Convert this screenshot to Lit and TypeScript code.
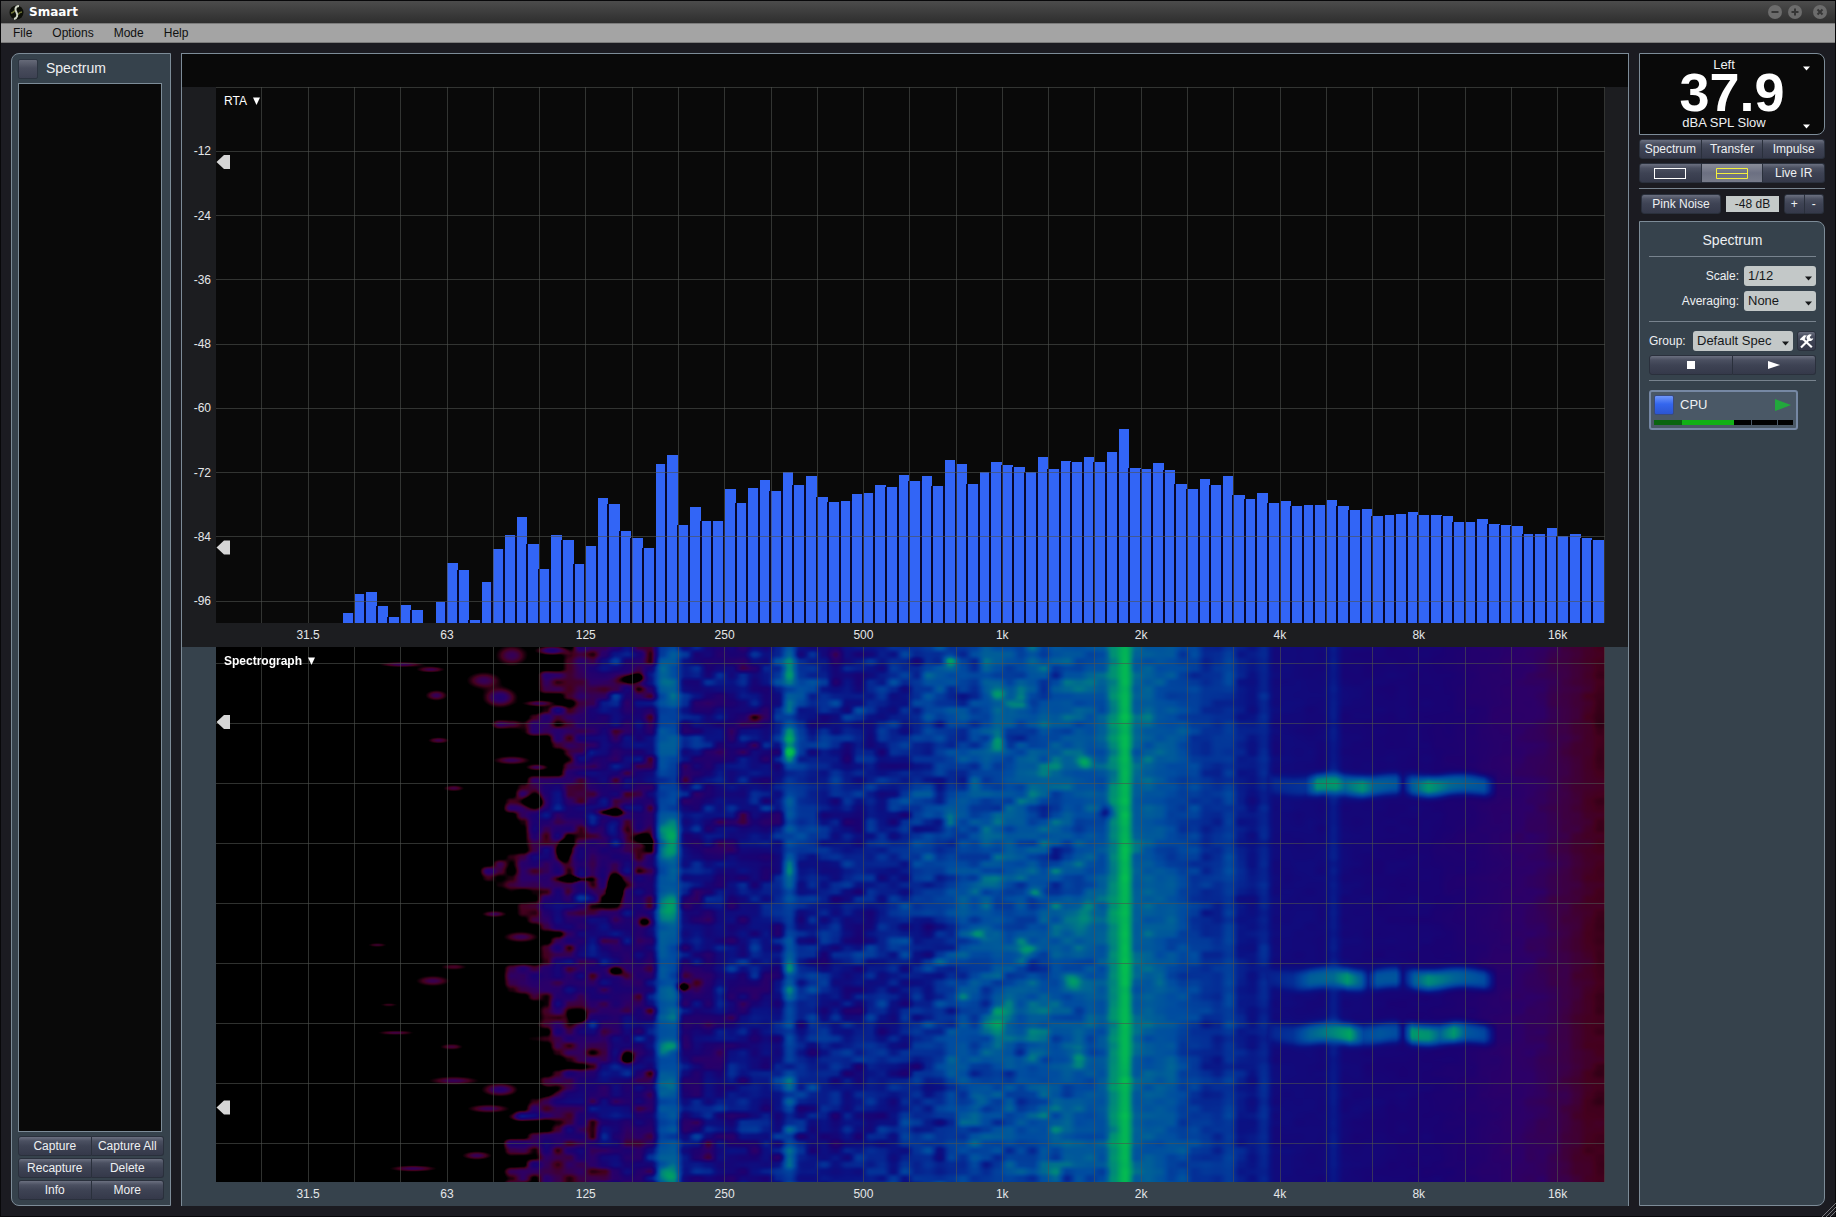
import { LitElement, html, css, svg } from "lit";
import { customElement, query } from "lit/decorators.js";
import { classMap } from "lit/directives/class-map.js";

/* Bar heights of the analyser, in plot units (536 units = 100 dB). */
const PLOT_W = 1389;
const PLOT_H = 536;
const FIRST_BAR = 11;
const BARS = [
  10, 29, 31, 17, 6, 18, 13, 0, 21, 60, 53, 3, 41, 74, 88, 106, 79, 54, 88, 83, 59, 77, 125, 119, 92, 85, 75, 159,
  168, 98, 116, 102, 102, 134, 120, 135, 143, 132, 151, 138, 147, 126, 121, 122, 129, 130, 138, 136, 148, 142, 147,
  137, 163, 159, 139, 151, 161, 158, 156, 151, 166, 154, 162, 161, 166, 161, 171, 194, 155, 154, 160, 153, 139, 134,
  144, 138, 147, 128, 124, 130, 120, 122, 117, 118, 118, 123, 117, 113, 114, 107, 108, 109, 111, 108, 108, 107, 101,
  101, 104, 99, 98, 97, 89, 89, 95, 87, 89, 85, 83,
];
const BANDS = ["31.5", "63", "125", "250", "500", "1k", "2k", "4k", "8k", "16k"];
const THIRD = 46.28;
const pctX = (v: number) => `${((v / PLOT_W) * 100).toFixed(3)}%`;
const pctY = (v: number) => `${((v / PLOT_H) * 100).toFixed(3)}%`;

const verticals = () =>
  Array.from({ length: 30 }, (_, k) => k + 1).map((k) => {
    const x = pctX(Math.min(Math.round(THIRD * k - 0.85), PLOT_W - 1));
    return svg`<rect class="grid" x=${x} y="0" width="1" height="100%"></rect>`;
  });
const horizontals = (ys: number[]) =>
  ys.map((y) => svg`<rect class="grid" x="0" y=${pctY(y)} width="100%" height="1"></rect>`);
const octaveLabels = () =>
  BANDS.map((b, i) => svg`<text x=${pctX(THIRD * (2 + 3 * i) - 0.5)} y="16" text-anchor="middle">${b}</text>`);

/* ---- Spectrograph level model ---- */
type Stop = [number, number];
const lerpStops = (stops: Stop[], x: number) => {
  if (x <= stops[0][0]) return stops[0][1];
  for (let i = 1; i < stops.length; i++) {
    if (x <= stops[i][0]) {
      const [x0, v0] = stops[i - 1];
      const [x1, v1] = stops[i];
      return v0 + ((v1 - v0) * (x - x0)) / (x1 - x0);
    }
  }
  return stops[stops.length - 1][1];
};
/* Average level per 1/12-octave column. */
const MEAN: Stop[] = [
  [0, -2], [22, 0.1], [27, 0.15], [30, 0.17], [32, 0.25], [34, 0.26], [37, 0.2], [37.6, 0.52], [38, 0.6],
  [39, 0.62], [40, 0.32], [44, 0.3], [48, 0.37], [49, 0.6], [50, 0.46], [54, 0.38], [58, 0.42], [61, 0.49],
  [64, 0.57], [68, 0.61], [73, 0.62], [76, 0.64], [77, 0.82], [78, 0.98], [79, 0.68], [82, 0.62], [83, 0.58],
  [85, 0.48], [86, 0.47], [87, 0.54], [88, 0.42], [89, 0.38], [90, 0.45], [91, 0.33], [95, 0.31], [96, 0.41],
  [97, 0.31], [100, 0.29], [104, 0.28], [107, 0.25], [111, 0.19], [114, 0.16], [116, 0.12], [118, 0.08],
  [119, 0.065],
];
const SPREAD: Stop[] = [
  [0, 0], [20, 0], [24, 0.12], [30, 0.15], [37, 0.15], [38, 0.07], [39, 0.07], [40, 0.14], [50, 0.12],
  [62, 0.11], [72, 0.1], [77, 0.04], [78, 0.025], [79, 0.05], [84, 0.06], [89, 0.035], [92, 0.012], [119, 0.01],
];
/* Left limit of the audible region: [y, column]. */
const EDGE: Stop[] = [
  [0, 31], [12, 30], [20, 31], [27, 28], [42, 28], [54, 32], [62, 29], [77, 24], [90, 29], [98, 29.5], [112, 31],
  [126, 30], [133, 27], [147, 26], [160, 25], [170, 26.5], [190, 27], [204, 27], [214, 24.5], [225, 23], [238, 24],
  [249, 26.5], [262, 26], [275, 27], [287, 30], [298, 28.5], [314, 28.5], [322, 25], [344, 25.5], [354, 28.5],
  [372, 28.5], [389, 25], [396, 28.5], [406, 29.5], [420, 32], [428, 29], [440, 27], [456, 27.5], [470, 26],
  [477, 30], [487, 28], [495, 25], [510, 25], [519, 27], [526, 25], [536, 25],
];
/* Local peaks and holes: [column, y, half-width in columns, half-height, level]. */
const SPOTS: number[][] = [
  [15.5, 17, 1.8, 2.5, 0.2], [18, 22, 1.2, 3, 0.18], [25, 8, 1.3, 10, 0.2], [28.5, 3, 1.2, 4, 0.3],
  [22.6, 33, 1.4, 8, 0.2], [24, 50, 1.3, 9, 0.28], [18.5, 48, 0.9, 5, 0.2], [27.4, 56, 1.3, 3, 0.2],
  [18.7, 93, 0.9, 3, 0.18], [25, 113, 1.5, 4, 0.2], [27.2, 120, 0.9, 3, 0.2], [20, 141, 0.9, 3, 0.17],
  [23.5, 267, 1, 3, 0.2], [25.8, 290, 1.4, 5, 0.2], [13.4, 298, 0.8, 1.5, 0.16], [20, 320, 1.2, 3, 0.14],
  [18.2, 334, 1.4, 5, 0.19], [14.4, 358, 0.8, 1.5, 0.13], [15, 386, 1.5, 2, 0.18], [19.8, 400, 1, 3, 0.16],
  [20, 434, 2, 4, 0.2], [24, 443, 1.4, 6, 0.26], [23, 462, 1.7, 4, 0.2], [25.8, 470, 1, 4, 0.22],
  [22, 509, 1.2, 4, 0.2], [16.5, 522, 1.9, 3, 0.2], [33.9, 240, 0.7, 18, -0.5], [35.4, 32, 1.2, 6, -0.4],
  [33.5, 165, 1.5, 4, -0.4], [36.3, 190, 1, 6, -0.4], [27, 155, 1, 7, -0.4], [29.5, 205, 0.6, 12, -0.4],
  [36.6, 275, 0.7, 6, -0.4], [34, 325, 0.7, 6, -0.4], [30.6, 370, 0.8, 6, -0.4], [39.8, 340, 0.6, 5, -0.5],
  [35, 412, 0.7, 7, -0.4], [27.6, 445, 1.2, 6, -0.4], [30.6, 232, 1.6, 3, -0.4], [31, 110, 1, 9, 0.25],
  [31, 248, 1, 9, 0.3], [33.5, 182, 0.8, 8, 0.25], [38.6, 188, 1.2, 16, 0.22], [38.7, 206, 1, 10, 0.2],
  [38.5, 260, 1.3, 16, 0.3], [38.4, 345, 1.1, 30, 0.08], [38.6, 400, 1, 8, 0.2], [38, 438, 1, 10, 0.16],
  [38.6, 528, 1.1, 10, 0.24], [38.6, 30, 1.2, 24, 0.1], [49, 25, 0.7, 16, 0.1], [49, 100, 0.8, 14, 0.18],
  [49, 155, 0.7, 14, 0.1], [49, 225, 0.7, 18, 0.08], [49, 322, 0.7, 9, 0.18], [49, 390, 0.7, 12, 0.1],
  [49, 520, 0.7, 10, 0.14], [67, 45, 0.8, 8, 0.24], [67, 98, 0.8, 9, 0.3], [69, 60, 0.9, 8, 0.2],
  [74.5, 115, 0.7, 7, 0.22], [62.8, 13, 0.7, 7, 0.2], [62.8, 178, 0.7, 14, 0.2], [65.6, 287, 1, 6, 0.24],
  [69.5, 305, 0.9, 9, 0.22], [70.5, 246, 0.8, 6, 0.22], [73.5, 335, 0.9, 8, 0.24], [67, 370, 0.9, 14, 0.2],
  [74.5, 265, 1, 18, 0.14], [66, 235, 1.4, 14, 0.14], [74, 410, 0.8, 10, 0.22], [70, 410, 1, 10, 0.16],
  [65.5, 455, 0.9, 7, 0.16], [73.5, 280, 2, 30, 0.06], [71, 370, 3, 30, 0.05], [76.4, 164, 0.6, 7, -0.26],
];
/* Short high-frequency bursts: vertical centre plus level by column. */
const BURSTS: { y: number; levels: Stop[] }[] = [
  {
    y: 138,
    levels: [
      [89, 0.3], [91, 0.46], [93.6, 0.5], [94.6, 0.84], [96.2, 0.86], [97, 0.72], [98.5, 0.84], [99.5, 0.7],
      [101.4, 0.64], [102, 0.35], [102.8, 0.66], [104.2, 0.86], [106, 0.72], [109, 0.62], [110.2, 0.22],
    ],
  },
  {
    y: 332,
    levels: [
      [88, 0.3], [90, 0.42], [92.5, 0.48], [94, 0.68], [96, 0.72], [97.2, 0.86], [98.4, 0.68], [99, 0.42],
      [99.8, 0.64], [101.4, 0.64], [102, 0.35], [103, 0.68], [104.2, 0.82], [106.5, 0.7], [109, 0.6], [110.2, 0.22],
    ],
  },
  {
    y: 387,
    levels: [
      [89, 0.3], [91, 0.46], [92.5, 0.5], [94, 0.7], [96, 0.8], [97.4, 0.9], [98.6, 0.58], [100, 0.64],
      [101.4, 0.6], [102, 0.35], [102.8, 0.86], [104.2, 0.84], [105.2, 0.7], [106.4, 0.86], [107.6, 0.64],
      [109, 0.58], [110.2, 0.22],
    ],
  },
];
const RAMP: [number, number[]][] = [
  [0, [0, 0, 0]], [0.07, [68, 0, 30]], [0.12, [60, 0, 70]], [0.18, [44, 0, 104]], [0.27, [26, 2, 114]],
  [0.38, [10, 18, 132]], [0.48, [4, 46, 150]], [0.6, [0, 76, 160]], [0.7, [0, 98, 150]], [0.8, [0, 134, 124]],
  [0.9, [0, 164, 96]], [1, [4, 188, 80]],
];
const rampTable = () => {
  const table = new Uint8ClampedArray(512 * 3);
  for (let i = 0; i < 512; i++) {
    const v = i / 511;
    let k = 1;
    while (k < RAMP.length - 1 && RAMP[k][0] < v) k++;
    const [a, ca] = RAMP[k - 1];
    const [b, cb] = RAMP[k];
    const f = (v - a) / (b - a);
    for (let c = 0; c < 3; c++) table[i * 3 + c] = ca[c] + (cb[c] - ca[c]) * f;
  }
  return table;
};

function paintSpectrograph(canvas: HTMLCanvasElement) {
  const cols = 122;
  const rowStep = 7;
  const rows = Math.ceil(PLOT_H / rowStep) + 2;
  let seed = 20117;
  const rnd = () => {
    seed = (seed * 1664525 + 1013904223) >>> 0;
    return seed / 4294967296;
  };
  const white: number[] = Array.from({ length: cols * (rows + 2) }, () => rnd() + rnd() + rnd() - 1.5);
  const at = (c: number, r: number) =>
    white[Math.min(rows + 1, Math.max(0, r)) * cols + Math.min(cols - 1, Math.max(0, c))];
  const levels = new Float32Array(cols * rows);
  for (let r = 0; r < rows; r++) {
    const y = r * rowStep;
    const edge = lerpStops(EDGE, y);
    for (let c = 0; c < cols; c++) {
      const n = at(c, r) * 1.25 + at(c, r + 1) * 0.55 + at(c - 1, r + 1) * 0.35 + at(c + 1, r) * 0.2;
      let v = lerpStops(MEAN, c) + n * lerpStops(SPREAD, c);
      if (c < 37) v = Math.min(v, (c - edge) * 0.28 + 0.2 + n * 0.05);
      levels[r * cols + c] = Math.max(-0.05, v);
    }
  }
  const ctx = canvas.getContext("2d");
  if (!ctx) return;
  const image = ctx.createImageData(PLOT_W, PLOT_H);
  const table = rampTable();
  const field = new Float32Array(PLOT_W * PLOT_H);
  const colW = PLOT_W / 120;
  for (let y = 0; y < PLOT_H; y++) {
    const ry = y / rowStep;
    const r = Math.floor(ry);
    const fy = ry - r;
    const sy = fy * fy * (3 - 2 * fy);
    for (let x = 0; x < PLOT_W; x++) {
      const rx = Math.max(0, x / colW - 0.5);
      const c = Math.floor(rx);
      const fx = rx - c;
      const sx = fx * fx * (3 - 2 * fx);
      const i = r * cols + c;
      const top = levels[i] + (levels[i + 1] - levels[i]) * sx;
      const low = levels[i + cols] + (levels[i + cols + 1] - levels[i + cols]) * sx;
      field[y * PLOT_W + x] = top + (low - top) * sy;
    }
  }
  for (const [c, cy, hw, hh, level] of SPOTS) {
    const cx = (c + 0.5) * colW;
    const w = hw * colW;
    for (let y = Math.max(0, Math.floor(cy - hh * 2)); y < Math.min(PLOT_H, cy + hh * 2); y++) {
      for (let x = Math.max(0, Math.floor(cx - w * 2)); x < Math.min(PLOT_W, cx + w * 2); x++) {
        const d = ((x - cx) / w) ** 2 + ((y - cy) / hh) ** 2;
        field[y * PLOT_W + x] += level * Math.exp(-d * 1.2);
      }
    }
  }
  for (const burst of BURSTS) {
    for (let y = burst.y - 20; y < burst.y + 20; y++) {
      for (let x = Math.floor(88 * colW); x < 112 * colW; x++) {
        const c = x / colW - 0.5;
        const shift = Math.sin(c * 1.1) * 1.5;
        const m = Math.exp(-Math.pow(Math.abs(y - burst.y - shift) / 10.5, 3));
        const i = y * PLOT_W + x;
        const target = lerpStops(burst.levels, c);
        if (target > field[i]) field[i] += (target - field[i]) * m;
      }
    }
  }
  for (let i = 0; i < field.length; i++) {
    const k = Math.max(0, Math.min(511, Math.round(field[i] * 511))) * 3;
    image.data[i * 4] = table[k];
    image.data[i * 4 + 1] = table[k + 1];
    image.data[i * 4 + 2] = table[k + 2];
    image.data[i * 4 + 3] = 255;
  }
  ctx.putImageData(image, 0, 0);
}

const downArrow = html`<svg class="down" width="7" height="5" viewBox="0 0 7 5" aria-hidden="true">
  <path d="M0 0.5H7L3.5 4.5Z" fill="currentColor"></path>
</svg>`;

const threshold = (y: number) => svg`
  <svg x="0" y=${pctY(y)} width="15" height="15" overflow="visible">
    <path d="M0.5 0L8 -7H14V7H8Z" fill="#d6d6d6"></path>
  </svg>`;

@customElement("app-root")
export class AppRoot extends LitElement {
  @query("canvas") private canvas!: HTMLCanvasElement;

  static styles = css`
    :host {
      display: flex;
      flex-direction: column;
      box-sizing: border-box;
      min-height: 100vh;
      border: 1px solid #08080a;
      background: #1b1b21;
      color: #eef0f2;
      font: 12px/16px "Liberation Sans", Arial, sans-serif;
    }
    * {
      box-sizing: border-box;
    }
    button,
    select,
    input {
      font: inherit;
      color: inherit;
      margin: 0;
      padding: 0;
      border: 0;
      border-radius: 0;
      background: none;
    }
    .titlebar {
      display: flex;
      align-items: center;
      gap: 5px;
      height: 22px;
      padding: 0 8px;
      background: linear-gradient(#4c4c4c, #2e2e2e);
    }
    .title {
      flex: 1;
      margin: 0;
      font: bold 12px/20px "DejaVu Sans", sans-serif;
      color: #fff;
    }
    .winbtn {
      display: block;
      width: 14px;
      height: 14px;
    }
    .winbtn.maximise {
      margin-left: 1px;
    }
    .winbtn.close {
      margin-left: 6px;
    }
    .winbtn svg,
    .run svg,
    .btn svg {
      display: block;
    }
    .menubar {
      display: flex;
      gap: 20px;
      height: 20px;
      padding: 0 12px;
      border-top: 1px solid #7c7c7c;
      border-bottom: 1px solid #7c7c7c;
      background: #a4a4a4;
      color: #101010;
    }
    .body {
      flex: 1;
      display: flex;
      gap: 10px;
      padding: 10px;
    }
    .panel {
      border: 1px solid #7d8c98;
      background: #36424c;
    }
    .left {
      display: flex;
      flex-direction: column;
      width: 160px;
      padding: 5px 6px;
      border-radius: 8px 0 0 8px;
    }
    .left-head {
      display: flex;
      align-items: center;
      gap: 8px;
      height: 20px;
      margin-bottom: 4px;
    }
    .left-head h2,
    .right h2 {
      margin: 0;
      font-weight: normal;
      font-size: 14px;
      line-height: 20px;
    }
    .left-head h2 {
      line-height: 18px;
      align-self: start;
    }
    .swatch {
      width: 20px;
      height: 20px;
      border: 1px solid #2c3440;
      border-radius: 2px;
      background: linear-gradient(#666a78, #484c5c 45%, #3d4152);
    }
    .captures {
      flex: 1;
      width: 144px;
      margin-bottom: 4px;
      border: 1px solid #7d8c98;
      background: #090909;
    }
    .captures-actions {
      display: grid;
      gap: 2px;
    }
    .pair,
    .modes {
      display: flex;
    }
    .btn {
      flex: 1 1 0;
      display: flex;
      align-items: center;
      justify-content: center;
      height: 20px;
      border: 1px solid #2a303c;
      background: linear-gradient(#6b7080 0, #4b5061 22%, #3e4354 50%, #35394a);
      white-space: nowrap;
    }
    .btn + .btn {
      border-left: 0;
    }
    .btn:first-child {
      border-radius: 3px 0 0 3px;
    }
    .btn:last-child {
      border-radius: 0 3px 3px 0;
    }
    .btn:only-child,
    .btn.single {
      border-radius: 3px;
    }
    .btn.active {
      background: linear-gradient(#8a8d99, #6c7082 50%, #777b8a);
    }
    .centre {
      flex: 1;
      display: flex;
      flex-direction: column;
      min-width: 0;
      border: 1px solid #7d8c98;
      border-bottom: 0;
    }
    .strip {
      height: 33px;
      background: #090909;
    }
    .graph {
      flex: 1;
      display: grid;
      grid-template: minmax(0, 1fr) 24px / 34px minmax(0, 1fr) 23px;
      min-height: 200px;
      background: #1c1d20;
    }
    .graph.spectrograph {
      background: #36424c;
    }
    .plot {
      grid-area: 1 / 2;
      position: relative;
      background: #090909;
    }
    .spectrograph .plot {
      background: #000;
    }
    .plot svg.layer,
    .plot canvas {
      position: absolute;
      inset: 0;
      width: 100%;
      height: 100%;
    }
    .layer {
      overflow: hidden;
    }
    .grid {
      fill: #4e524e;
      fill-opacity: 0.6;
      shape-rendering: crispEdges;
    }
    .bar {
      fill: #3265f6;
      shape-rendering: crispEdges;
    }
    .bar-gap {
      fill: #07082e;
      shape-rendering: crispEdges;
    }
    .axis {
      display: block;
      width: 100%;
      height: 100%;
      overflow: visible;
      fill: #e4e6e8;
      font-size: 12px;
    }
    .axis.y {
      grid-area: 1 / 1;
    }
    .axis.x {
      grid-area: 2 / 2;
    }
    .graph-name {
      position: absolute;
      left: 8px;
      top: 6px;
      display: flex;
      align-items: center;
      gap: 6px;
      color: #fff;
    }
    .graph-name.strong {
      font-weight: bold;
    }
    .right {
      display: flex;
      flex-direction: column;
      width: 186px;
    }
    .meter {
      height: 82px;
      padding-top: 2px;
      border: 1px solid #7d8c98;
      border-radius: 0 8px 8px 0;
      background: #090909;
    }
    .meter button {
      display: flex;
      align-items: center;
      width: 100%;
      height: 18px;
      padding-left: 8px;
      font-size: 13px;
      line-height: 18px;
    }
    .meter button span {
      flex: 1;
      text-align: center;
    }
    .meter .down {
      width: 24px;
      padding: 6px 14px 0 3px;
      height: 11px;
      color: #fff;
    }
    .reading {
      display: block;
      height: 40px;
      color: #fff;
      text-align: center;
      font-size: 54px;
      font-weight: bold;
      line-height: 36px;
    }
    .modes {
      margin-top: 4px;
    }
    .divider {
      width: 100%;
      height: 1px;
      margin: 0;
      border: 0;
      background: #78838e;
    }
    .right > .divider {
      margin-top: 5px;
    }
    .generator {
      display: flex;
      align-items: center;
      gap: 5px;
      margin: 5px 1px 7px 2px;
    }
    .generator .pink {
      flex: 0 0 80px;
    }
    .generator .gain {
      flex: 1;
      width: 0;
      height: 16px;
      background: #c5cac9;
      color: #16181a;
      text-align: center;
    }
    .generator .pair {
      flex: 0 0 40px;
    }
    .control {
      flex: 1;
      padding: 8px 8px 8px 9px;
      border-radius: 0 8px 8px 0;
    }
    .control h2 {
      margin-bottom: 6px;
      text-align: center;
    }
    .fields {
      display: grid;
      grid-template-columns: 1fr 72px;
      gap: 5px;
      align-items: center;
      padding: 9px 0 10px;
    }
    .fields label {
      text-align: right;
    }
    .choice {
      display: grid;
      color: #16181a;
    }
    .choice select {
      grid-area: 1 / 1;
      width: 100%;
      height: 20px;
      padding-left: 4px;
      border-radius: 3px;
      background: #c3c8c8;
      font-size: 13px;
      appearance: none;
    }
    .choice .down {
      grid-area: 1 / 1;
      justify-self: end;
      align-self: end;
      margin: 0 4px 5px 0;
      pointer-events: none;
    }
    .group {
      display: grid;
      grid-template-columns: 1fr 100px 19px;
      gap: 4px;
      align-items: center;
      padding: 9px 0 4px;
    }
    .transport {
      margin-bottom: 5px;
    }
    .card {
      width: 149px;
      margin-top: 9px;
      padding: 3px 3px 3px;
      border: 2px solid #7688a4;
      border-radius: 3px;
      background: #4a5866;
    }
    .card-row {
      display: flex;
      align-items: center;
      gap: 6px;
      height: 20px;
      padding-right: 2px;
      font-size: 13px;
    }
    .card-name {
      flex: 1;
    }
    .card-colour {
      width: 20px;
      height: 20px;
      border: 1px solid #3a4b7c;
      border-radius: 2px;
      background: linear-gradient(#6f97fb, #3466ee 45%, #2c55d0);
    }
    .level {
      display: grid;
      grid-template-columns: 28fr 51fr 17fr 26fr 16fr;
      height: 5px;
      margin-top: 5px;
      background: #000;
    }
    .level .low {
      background: #0a6410;
    }
    .level .mid {
      background: #12b016;
    }
    .level .tick {
      border-left: 1px solid #4a5866;
    }
    .grip {
      position: absolute;
      right: 0;
      bottom: 0;
    }
  `;

  protected firstUpdated() {
    paintSpectrograph(this.canvas);
  }

  private titleBar() {
    return html`<header class="titlebar">
      <svg width="15" height="15" viewBox="0 0 15 15" aria-hidden="true">
        <circle cx="7.5" cy="7.5" r="7" fill="#0d0f08"></circle>
        <path d="M2 8C4 8 5 6.500 6 5.500M9 9.500C10 8 11.500 7 13 7" stroke="#6d7336" stroke-width="1.6" fill="none"></path>
        <path d="M10 1C5.500 1.500 6 5 7.500 7.500S8.500 13 5 14" stroke="#cfd4c4" stroke-width="2" fill="none"></path>
      </svg>
      <h1 class="title">Smaart</h1>
      ${[
        ["Minimise", "M3.500 7H10.500", "minimise"],
        ["Maximise", "M3.500 7H10.500M7 3.500V10.500", "maximise"],
        ["Close", "M4.500 4.500L9.500 9.500M9.500 4.500L4.500 9.500", "close"],
      ].map(
        ([label, d, extra]) => html`<button class="winbtn ${extra}" aria-label=${label}>
          <svg width="14" height="14" viewBox="0 0 14 14">
            <circle cx="7" cy="7" r="7" fill="#6c6c6c"></circle>
            <path d=${d} stroke="#363636" stroke-width="2" fill="none"></path>
          </svg>
        </button>`,
      )}
    </header>`;
  }

  private leftPanel() {
    const rows = [
      ["Capture", "Capture All"],
      ["Recapture", "Delete"],
      ["Info", "More"],
    ];
    return html`<aside class="panel left">
      <div class="left-head">
        <button class="swatch" aria-label="Toggle captures"></button>
        <h2>Spectrum</h2>
      </div>
      <div class="captures"></div>
      <div class="captures-actions">
        ${rows.map((r) => html`<div class="pair">${r.map((t) => html`<button class="btn">${t}</button>`)}</div>`)}
      </div>
    </aside>`;
  }

  private graphName(name: string, strong: boolean) {
    return html`<button class=${classMap({ "graph-name": true, strong })}>
      ${name}
      <svg width="7" height="8" viewBox="0 0 7 8" aria-hidden="true"><path d="M0 0.500H7L3.500 8Z" fill="#fff"></path></svg>
    </button>`;
  }

  private rta() {
    const barStep = PLOT_W / 120;
    const steps = [1, 2, 3, 4, 5, 6, 7, 8];
    return html`<section class="graph">
      <svg class="axis y" aria-hidden="true">
        ${steps.map((i) => svg`<text x="29" y=${pctY(i * 64.32 + 4)} text-anchor="end">${-12 * i}</text>`)}
      </svg>
      <div class="plot">
        <svg class="layer" role="img" aria-label="RTA spectrum">
          ${BARS.map((h, i) => {
            const x = (FIRST_BAR + i) * barStep - 0.3;
            const joined = Math.min(h, BARS[i - 1] ?? 0);
            if (h === 0) return null;
            return svg`
              <rect class="bar-gap" x=${pctX(x - 2)} y=${pctY(PLOT_H - joined)} width="3" height=${pctY(joined + 2)}></rect>
              <rect class="bar" x=${pctX(x)} y=${pctY(PLOT_H - h)} width=${pctX(barStep - 1)} height=${pctY(h + 2)}></rect>`;
          })}
          ${verticals()} ${horizontals([0, ...steps.map((i) => i * 64.32 - 0.4)])} ${threshold(75)} ${threshold(461)}
        </svg>
        ${this.graphName("RTA", false)}
      </div>
      <svg class="axis x" aria-hidden="true">${octaveLabels()}</svg>
    </section>`;
  }

  private spectrograph() {
    return html`<section class="graph spectrograph">
      <div class="plot">
        <canvas width=${PLOT_W} height=${PLOT_H} role="img" aria-label="Spectrograph"></canvas>
        <svg class="layer" aria-hidden="true">
          ${verticals()} ${horizontals([0, 1, 2, 3, 4, 5, 6, 7, 8].map((i) => 16 + i * 60))} ${threshold(75)}
          ${threshold(461)}
        </svg>
        ${this.graphName("Spectrograph", true)}
      </div>
      <svg class="axis x" aria-hidden="true">${octaveLabels()}</svg>
    </section>`;
  }

  private choice(id: string, value: string) {
    return html`<div class="choice">
      <select id=${id}>
        <option>${value}</option>
      </select>
      ${downArrow}
    </div>`;
  }

  private rightPanel() {
    return html`<aside class="right">
      <div class="meter">
        <button><span>Left</span>${downArrow}</button>
        <output class="reading">37.9</output>
        <button><span>dBA SPL Slow</span>${downArrow}</button>
      </div>
      <div class="modes">
        <button class="btn">Spectrum</button>
        <button class="btn">Transfer</button>
        <button class="btn">Impulse</button>
      </div>
      <div class="modes">
        <button class="btn" aria-label="Single view">
          <svg width="32" height="11"><rect x="0.500" y="0.500" width="31" height="10" fill="none" stroke="#fff"></rect></svg>
        </button>
        <button class="btn active" aria-label="Split view">
          <svg width="32" height="11">
            <path d="M0.500 0.500H31.500V10.500H0.500ZM0.500 5.500H31.500" fill="none" stroke="#f4f03c"></path>
          </svg>
        </button>
        <button class="btn">Live IR</button>
      </div>
      <hr class="divider" />
      <div class="generator">
        <button class="btn single pink">Pink Noise</button>
        <input class="gain" aria-label="Noise level" value="-48 dB" />
        <div class="pair">
          <button class="btn">+</button>
          <button class="btn">-</button>
        </div>
      </div>
      <section class="panel control">
        <h2>Spectrum</h2>
        <hr class="divider" />
        <div class="fields">
          <label for="scale">Scale:</label>${this.choice("scale", "1/12")}
          <label for="averaging">Averaging:</label>${this.choice("averaging", "None")}
        </div>
        <hr class="divider" />
        <div class="group">
          <label for="group">Group:</label>${this.choice("group", "Default Spec")}
          <button class="btn single" aria-label="Group settings">
            <svg width="15" height="15" viewBox="0 0 15 15">
              <path d="M3.500 4.500L12.800 13.200" stroke="#fff" stroke-width="2.200"></path>
              <path d="M0.800 5.200L5 1.200L8 1.500L6.200 3.200L6.600 4L4 6.600L2.800 5.800L2 6.500Z" fill="#fff"></path>
              <path d="M2 13.500L10.500 5" stroke="#fff" stroke-width="2.200"></path>
              <path d="M12.800 0.800A3.400 3.400 0 1 0 14.300 4.200L12 4.800L10.800 3.500L11.200 2.500Z" fill="#fff"></path>
            </svg>
          </button>
        </div>
        <div class="pair transport">
          <button class="btn" aria-label="Stop">
            <svg width="8" height="8"><rect width="8" height="8" fill="#fff"></rect></svg>
          </button>
          <button class="btn" aria-label="Play">
            <svg width="12" height="8"><path d="M0 0L12 4L0 8Z" fill="#fff"></path></svg>
          </button>
        </div>
        <hr class="divider" />
        <div class="card">
          <div class="card-row">
            <button class="card-colour" aria-label="Trace colour"></button>
            <span class="card-name">CPU</span>
            <button class="run" aria-label="Run CPU">
              <svg width="16" height="12"><path d="M0 0L16 6L0 12Z" fill="#22a83c"></path></svg>
            </button>
          </div>
          <div class="level">
            <span class="low"></span><span class="mid"></span><span></span><span class="tick"></span
            ><span class="tick"></span>
          </div>
        </div>
      </section>
    </aside>`;
  }

  render() {
    return html`
      ${this.titleBar()}
      <nav class="menubar">${["File", "Options", "Mode", "Help"].map((t) => html`<button>${t}</button>`)}</nav>
      <main class="body">
        ${this.leftPanel()}
        <div class="centre">
          <div class="strip"></div>
          ${this.rta()} ${this.spectrograph()}
        </div>
        ${this.rightPanel()}
      </main>
      <svg class="grip" width="14" height="14" aria-hidden="true">
        <path d="M0 14L14 0M4 14L14 4M8 14L14 8" stroke="#77777c" fill="none"></path>
      </svg>
    `;
  }
}
